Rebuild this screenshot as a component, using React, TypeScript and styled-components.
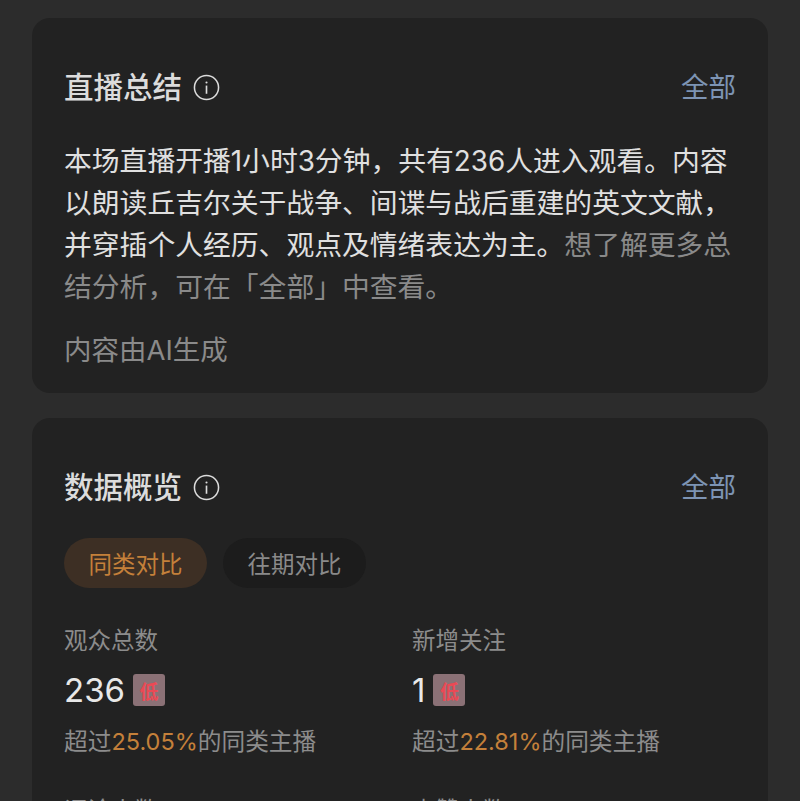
import styled, { createGlobalStyle } from 'styled-components';

const GlobalStyle = createGlobalStyle`
  html, body {
    margin: 0;
    height: 801px;
    overflow: hidden;
    background: #2c2c2c;
  }
  body {
    font-family: "Inter", "Liberation Sans", "Noto Sans CJK SC", sans-serif;
  }
`;

const Page = styled.div`
  display: flex;
  flex-direction: column;
  gap: 25px;
  padding: 18px 32px 0;
  height: 801px;
  overflow: hidden;
  box-sizing: border-box;
`;

const Card = styled.section`
  background: #222222;
  border-radius: 18px;
  padding: 51px 32px 22px;
`;

const CardHead = styled.header`
  display: flex;
  align-items: center;
  justify-content: space-between;
  height: 36px;
`;

const TitleGroup = styled.div`
  display: flex;
  align-items: center;
  gap: 11px;
`;

const Title = styled.h2`
  margin: 0;
  font-size: 29.5px;
  line-height: 36px;
  font-weight: 500;
  color: #dcdcdc;
`;

const MoreLink = styled.a`
  font-size: 27.5px;
  line-height: 36px;
  color: #7d94b4;
`;

const Summary = styled.p`
  margin: 35px 0 0;
  font-size: 27.8px;
  line-height: 42px;
  color: #e0e0e0;
`;

const Muted = styled.span`
  color: #8a8a8a;
`;

const Disclaimer = styled.p`
  margin: 21px 0 0;
  font-size: 27.5px;
  line-height: 42px;
  color: #8a8a8a;
`;

const Tabs = styled.div`
  display: flex;
  gap: 16px;
  margin-top: 33px;
`;

const Tab = styled.div<{ $active?: boolean }>`
  width: 143px;
  height: 50px;
  display: flex;
  align-items: center;
  justify-content: center;
  border-radius: 25px;
  font-size: 23.5px;
  background: ${p => (p.$active ? '#3d2f24' : '#1c1c1c')};
  color: ${p => (p.$active ? '#c4803a' : '#8a8a8a')};
`;

const Stats = styled.div`
  display: grid;
  grid-template-columns: 348px 1fr;
  row-gap: 37px;
  margin-top: 37px;
`;

const Stat = styled.div`
  display: flex;
  flex-direction: column;
`;

const StatLabel = styled.div`
  font-size: 23.5px;
  line-height: 32px;
  color: #8c8c8c;
`;

const ValueRow = styled.div`
  display: flex;
  align-items: center;
  gap: 8px;
  height: 34px;
  margin-top: 16px;
`;

const Value = styled.span`
  font-size: 33px;
  line-height: 34px;
  font-weight: 400;
  color: #e8e8e8;
`;

const LevelBadge = styled.span`
  width: 32px;
  height: 32px;
  display: flex;
  align-items: center;
  justify-content: center;
  border-radius: 3px;
  background: #8b7176;
  color: #ea4a55;
  font-size: 19px;
  font-weight: 700;
`;

const Compare = styled.div`
  margin-top: 19px;
  font-size: 23.7px;
  line-height: 32px;
  color: #8c8c8c;
  white-space: nowrap;
`;

const Highlight = styled.span`
  font-size: 23.5px;
  color: #c4803a;
`;

const InfoIcon = () => (
  <svg width="27" height="27" viewBox="0 0 28 28" fill="none" stroke="#dcdcdc">
    <circle cx="14" cy="14" r="12.5" strokeWidth="1.6" />
    <circle cx="14" cy="8.8" r="1.1" fill="#dcdcdc" stroke="none" />
    <path d="M14 12v8.5" strokeWidth="1.7" />
  </svg>
);

const stats = [
  { label: '观众总数', value: '236', pct: '25.05%' },
  { label: '新增关注', value: '1', pct: '22.81%' },
  { label: '评论人数', value: '0', pct: '0%' },
  { label: '点赞人数', value: '0', pct: '0%' },
];

export default function App() {
  return (
    <>
      <GlobalStyle />
      <Page>
        <Card>
          <CardHead>
            <TitleGroup>
              <Title>直播总结</Title>
              <InfoIcon />
            </TitleGroup>
            <MoreLink>全部</MoreLink>
          </CardHead>
          <Summary>
            本场直播开播1小时3分钟，共有236人进入观看。内容以朗读丘吉尔关于战争、间谍与战后重建的英文文献，并穿插个人经历、观点及情绪表达为主。
            <Muted>想了解更多总结分析，可在「全部」中查看。</Muted>
          </Summary>
          <Disclaimer>内容由AI生成</Disclaimer>
        </Card>
        <Card>
          <CardHead>
            <TitleGroup>
              <Title>数据概览</Title>
              <InfoIcon />
            </TitleGroup>
            <MoreLink>全部</MoreLink>
          </CardHead>
          <Tabs>
            <Tab $active>同类对比</Tab>
            <Tab>往期对比</Tab>
          </Tabs>
          <Stats>
            {stats.map(s => (
              <Stat key={s.label}>
                <StatLabel>{s.label}</StatLabel>
                <ValueRow>
                  <Value>{s.value}</Value>
                  <LevelBadge>低</LevelBadge>
                </ValueRow>
                <Compare>
                  超过<Highlight>{s.pct}</Highlight>的同类主播
                </Compare>
              </Stat>
            ))}
          </Stats>
        </Card>
      </Page>
    </>
  );
}
